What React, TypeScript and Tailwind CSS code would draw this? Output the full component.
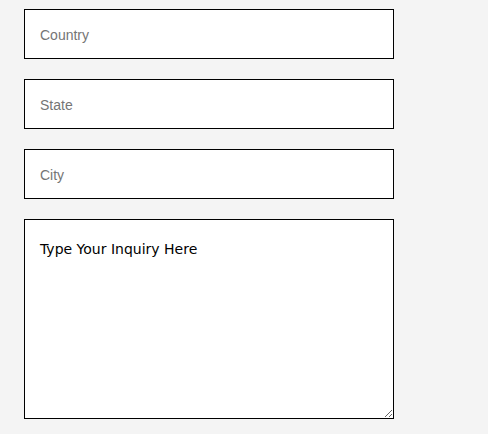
const FIELDS = ['Country', 'State', 'City']

export default function App() {
  return (
    <div className="min-h-[434px] bg-[#f4f4f4] pl-6 pt-[9px]">
      <form className="flex w-[370px] flex-col gap-5">
        {FIELDS.map((f) => (
          <input
            key={f}
            type="text"
            placeholder={f}
            className="h-[50px] w-full border border-black bg-white px-[15px] pt-[2px] font-['Liberation_Sans',Arial,sans-serif] text-sm text-black placeholder:text-[#757575] outline-none"
          />
        ))}
        <textarea
          placeholder="Type Your Inquiry Here"
          className="block h-[200px] w-full border border-black bg-white px-[15px] pt-[19px] font-['DejaVu_Sans',sans-serif] text-[14px] leading-5 text-black placeholder:text-black outline-none"
        />
      </form>
    </div>
  )
}
